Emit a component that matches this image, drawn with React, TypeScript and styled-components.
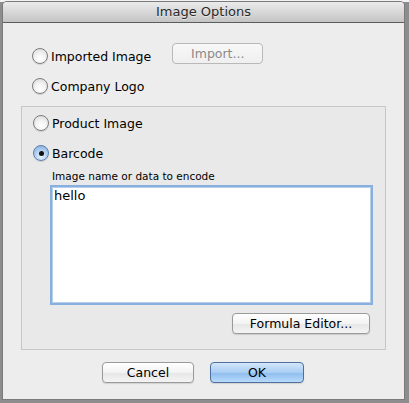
import React from "react";
import styled, { createGlobalStyle, css } from "styled-components";

const GlobalStyle = createGlobalStyle`
  html, body {
    margin: 0;
    padding: 0;
  }
  body {
    width: 409px;
    height: 403px;
    overflow: hidden;
    background: linear-gradient(#f3f3f6 0 2px, #8d8d8d 2px);
    font-family: "DejaVu Sans", "Liberation Sans", sans-serif;
  }
`;

type RadioProps = { $checked?: boolean };

const Radio: React.FC<{ checked?: boolean; label: string }> = ({ checked, label }) => (
  <RadioRow>
    <RadioCircle $checked={checked}>{checked && <RadioDot />}</RadioCircle>
    <RadioLabel>{label}</RadioLabel>
  </RadioRow>
);

export default function App() {
  return (
    <>
      <GlobalStyle />
      <Desktop>
        <Window>
          <TitleBar>Image Options</TitleBar>
          <Content>
            <TopRow>
              <Radio label="Imported Image" />
              <Button disabled $width={91} $offset={-5}>
                Import...
              </Button>
            </TopRow>
            <Radio label="Company Logo" />
            <GroupBox>
              <Radio label="Product Image" />
              <Radio checked label="Barcode" />
              <Indented>
                <FieldLabel>Image name or data to encode</FieldLabel>
                <TextArea defaultValue="hello" />
                <RightRow>
                  <Button $width={138}>Formula Editor...</Button>
                </RightRow>
              </Indented>
            </GroupBox>
            <ButtonBar>
              <Button $width={92}>Cancel</Button>
              <Button $primary $width={94}>
                OK
              </Button>
            </ButtonBar>
          </Content>
        </Window>
      </Desktop>
    </>
  );
}

const Desktop = styled.div`
  padding: 2px 5px 4px 3px;
`;

const Window = styled.div`
  width: 401px;
  height: 397px;
  background: #ededed;
  border-radius: 4px 4px 0 0;
  box-shadow: 0 0 0 1px #7a7a7a;
  display: flex;
  flex-direction: column;
  overflow: hidden;
`;

const TitleBar = styled.div`
  height: 20px;
  line-height: 20px;
  text-align: center;
  font-size: 13px;
  color: #2a2a2a;
  background: linear-gradient(#ebebeb, #c4c4c4);
  border-bottom: 1px solid #5c5c5c;
  text-shadow: 0 1px 0 rgba(255, 255, 255, 0.5);
`;

const Content = styled.div`
  padding: 25px 18px 0 18px;
  display: flex;
  flex-direction: column;
  gap: 14px;
`;

const TopRow = styled.div`
  display: flex;
  align-items: flex-start;
  gap: 21px;
`;

const RadioRow = styled.div`
  display: flex;
  align-items: center;
  gap: 3px;
  height: 16px;
  padding-left: 11px;
`;

const RadioCircle = styled.div<RadioProps>`
  width: 14px;
  height: 14px;
  border-radius: 50%;
  border: 1px solid #7d7d7d;
  display: flex;
  align-items: center;
  justify-content: center;
  background: radial-gradient(circle at 50% 70%, #ffffff 0%, #f4f4f4 40%, #d6d6d6 100%);
  box-shadow: 0 1px 1px rgba(0, 0, 0, 0.12);
  ${(p) =>
    p.$checked &&
    css`
      border-color: #5a7fae;
      background: radial-gradient(circle at 50% 75%, #e6f2ff 0%, #b5d3f3 45%, #7fa8db 100%);
    `}
`;

const RadioDot = styled.div`
  width: 5px;
  height: 5px;
  border-radius: 50%;
  background: #111;
`;

const RadioLabel = styled.span`
  font-size: 12.5px;
  color: #000;
`;

const Button = styled.button<{ $primary?: boolean; $width: number; $offset?: number }>`
  width: ${(p) => p.$width}px;
  height: 21px;
  margin-top: ${(p) => p.$offset ?? 0}px;
  border: 1px solid #9a9a9a;
  border-radius: 4px;
  font-family: inherit;
  font-size: 12.5px;
  color: #000;
  padding: 0;
  background: linear-gradient(#ffffff, #f3f3f3 50%, #e6e6e6 51%, #f4f4f4);
  box-shadow: 0 1px 1px rgba(0, 0, 0, 0.12);
  &:disabled {
    color: #8a8a8a;
    border-color: #b9b9b9;
    background: linear-gradient(#f8f8f8, #efefef);
    box-shadow: none;
  }
  ${(p) =>
    p.$primary &&
    css`
      border-color: #4f6f9e;
      background: linear-gradient(#d3e6fb, #a9cdf3 50%, #8dbcee 51%, #b8dafc);
    `}
`;

const GroupBox = styled.div`
  margin-top: -2px;
  border: 1px solid #c6c6c6;
  background: #e9e9e9;
  padding: 8px 0 15px 0;
  display: flex;
  flex-direction: column;
  gap: 14px;
`;

const Indented = styled.div`
  margin: -5px 12px 0 28px;
  display: flex;
  flex-direction: column;
`;

const FieldLabel = styled.div`
  font-size: 10.5px;
  color: #000;
  height: 14px;
  margin-bottom: 1px;
  padding-left: 2px;
`;

const TextArea = styled.textarea`
  box-sizing: border-box;
  height: 120px;
  width: 100%;
  resize: none;
  border: 2px solid #87afe0;
  box-shadow: inset 0 0 0 1px #b8cfe9;
  outline: none;
  font-family: inherit;
  font-size: 13px;
  color: #000;
  padding: 1px 2px;
  background: #fff;
`;

const RightRow = styled.div`
  display: flex;
  justify-content: flex-end;
  padding-right: 3px;
  margin-top: 8px;
`;

const ButtonBar = styled.div`
  display: flex;
  justify-content: center;
  gap: 16px;
  margin-top: -2px;
  padding-right: 1px;
`;
